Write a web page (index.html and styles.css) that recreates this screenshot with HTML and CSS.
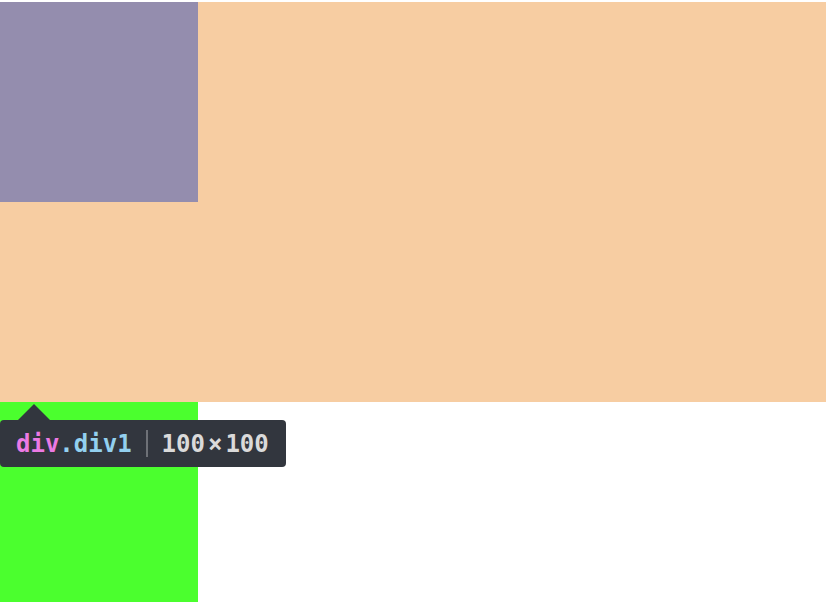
FILE: index.html
```html
<!DOCTYPE html>
<html>
<head>
<meta charset="utf-8">
<link rel="stylesheet" href="styles.css">
</head>
<body>
<div class="outer">
  <div class="div1"></div>
</div>
<div class="div2"></div>
<div class="tooltip">
  <span class="tag">div</span><span class="cls">.div1</span>
  <span class="sep"></span>
  <span class="dim">100<span class="times">×</span>100</span>
</div>
</body>
</html>
```
FILE: styles.css
```css
html, body {
  margin: 0;
  padding: 0;
  background: #ffffff;
}
body {
  padding-top: 2px;
  position: relative;
  font-family: "DejaVu Sans Mono", "Liberation Mono", monospace;
}
.outer {
  background: #f7cda2;
  height: 400px;
}
.div1 {
  background: #948dae;
  width: 198px;
  height: 200px;
}
.div2 {
  background: #4bff2e;
  width: 198px;
  height: 200px;
}
.tooltip {
  position: absolute;
  left: 0;
  top: 420px;
  width: 286px;
  height: 47px;
  box-sizing: border-box;
  padding-left: 16px;
  background: #32363e;
  border-radius: 4px;
  display: flex;
  align-items: center;
  font-size: 24px;
  font-weight: bold;
  line-height: 1;
  white-space: nowrap;
}
.tooltip::before {
  content: "";
  position: absolute;
  left: 18px;
  top: -16px;
  width: 0;
  height: 0;
  border-left: 16px solid transparent;
  border-right: 16px solid transparent;
  border-bottom: 16px solid #32363e;
}
.tag { color: #ec7ae4; }
.cls { color: #93d0ef; }
.sep {
  display: inline-block;
  width: 2px;
  height: 27px;
  background: #6e7177;
  margin: 0 14px 0 14px;
}
.dim { color: #dadada; }
.times {
  margin: 0 3px;
}
```
